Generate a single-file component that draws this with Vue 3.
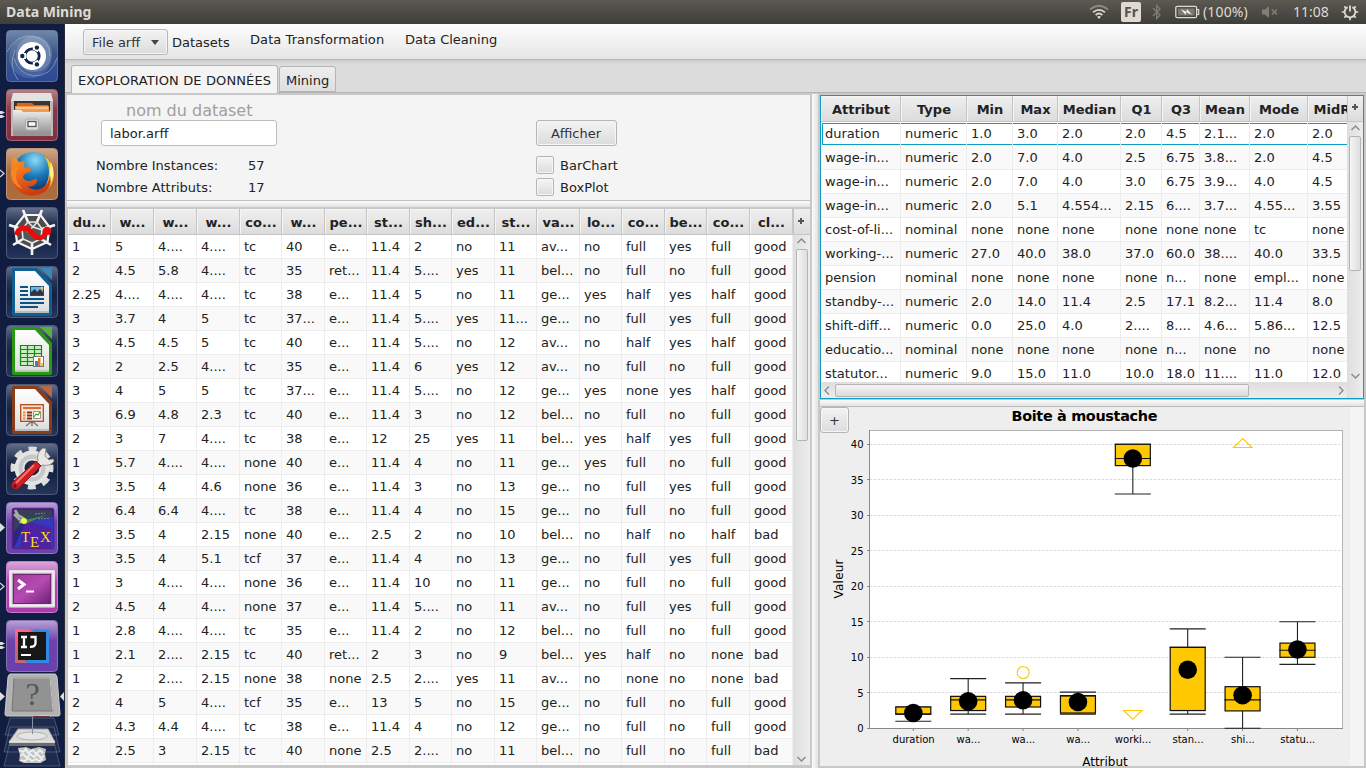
<script setup>
const cols = [43, 43, 43, 43, 42, 43, 42, 43, 42, 43, 42, 43, 42, 43, 42, 43, 43]
const gridLeft = cols.map((w) => w + 'px').join(' ')
const headLeft = 'du...|w...|w...|w...|co...|w...|pe...|st...|sh...|ed...|st...|va...|lo...|co...|be...|co...|cl...'.split('|')
const rowsLeft = `1|5|4....|4....|tc|40|e...|11.4|2|no|11|av...|no|full|yes|full|good
2|4.5|5.8|4....|tc|35|ret...|11.4|5....|yes|11|bel...|no|full|no|full|good
2.25|4....|4....|4....|tc|38|e...|11.4|5|no|11|ge...|yes|half|yes|half|good
3|3.7|4|5|tc|37...|e...|11.4|5....|yes|11...|ge...|no|full|yes|full|good
3|4.5|4.5|5|tc|40|e...|11.4|5....|no|12|av...|no|half|yes|half|good
2|2|2.5|4....|tc|35|e...|11.4|6|yes|12|av...|no|full|no|full|good
3|4|5|5|tc|37...|e...|11.4|5....|no|12|ge...|yes|none|yes|half|good
3|6.9|4.8|2.3|tc|40|e...|11.4|3|no|12|bel...|no|full|no|full|good
2|3|7|4....|tc|38|e...|12|25|yes|11|bel...|yes|half|yes|full|good
1|5.7|4....|4....|none|40|e...|11.4|4|no|11|ge...|yes|full|no|full|good
3|3.5|4|4.6|none|36|e...|11.4|3|no|13|ge...|no|full|yes|full|good
2|6.4|6.4|4....|tc|38|e...|11.4|4|no|15|ge...|no|full|no|full|good
2|3.5|4|2.15|none|40|e...|2.5|2|no|10|bel...|no|half|no|half|bad
3|3.5|4|5.1|tcf|37|e...|11.4|4|no|13|ge...|no|full|yes|full|good
1|3|4....|4....|none|36|e...|11.4|10|no|11|ge...|no|full|no|full|good
2|4.5|4|4....|none|37|e...|11.4|5....|no|11|av...|no|full|yes|full|good
1|2.8|4....|4....|tc|35|e...|11.4|2|no|12|bel...|no|full|no|full|good
1|2.1|2....|2.15|tc|40|ret...|2|3|no|9|bel...|yes|half|no|none|bad
1|2|2....|2.15|none|38|none|2.5|2....|yes|11|av...|no|none|no|none|bad
2|4|5|4....|tcf|35|e...|13|5|no|15|ge...|no|full|no|full|good
2|4.3|4.4|4....|tc|38|e...|11.4|4|no|12|ge...|no|full|no|full|good
2|2.5|3|2.15|tc|40|none|2.5|2....|no|11|bel...|no|full|no|full|bad`.split('\n').map((r) => r.split('|'))

const gridRight = '80px 66px 46px 45px 63px 41px 38px 50px 58px 84px'
const headRight = 'Attribut|Type|Min|Max|Median|Q1|Q3|Mean|Mode|MidRange'.split('|')
const rowsRight = `duration|numeric|1.0|3.0|2.0|2.0|4.5|2.1...|2.0|2.0
wage-in...|numeric|2.0|7.0|4.0|2.5|6.75|3.8...|2.0|4.5
wage-in...|numeric|2.0|7.0|4.0|3.0|6.75|3.9...|4.0|4.5
wage-in...|numeric|2.0|5.1|4.554...|2.15|6....|3.7...|4.55...|3.55
cost-of-li...|nominal|none|none|none|none|none|none|tc|none
working-...|numeric|27.0|40.0|38.0|37.0|60.0|38....|40.0|33.5
pension|nominal|none|none|none|none|n...|none|empl...|none
standby-...|numeric|2.0|14.0|11.4|2.5|17.1|8.2...|11.4|8.0
shift-diff...|numeric|0.0|25.0|4.0|2....|8....|4.6...|5.86...|12.5
educatio...|nominal|none|none|none|none|n...|none|no|none
statutor...|numeric|9.0|15.0|11.0|10.0|18.0|11....|11.0|12.0`.split('\n').map((r) => r.split('|'))

// Chart geometry: origin of the svg is the top-left corner of the chart panel.
const y = (v) => 321.3 - v * 7.1
const ticks = [0, 5, 10, 15, 20, 25, 30, 35, 40]
const boxes = [
  { n: 'duration', lo: 1, q1: 2, med: 2, q3: 3, hi: 3, mean: 2.16 },
  { n: 'wa...', lo: 2, q1: 2.5, med: 4, q3: 4.5, hi: 7, mean: 3.8 },
  { n: 'wa...', lo: 2, q1: 3, med: 4, q3: 4.5, hi: 6.4, mean: 3.95 },
  { n: 'wa...', lo: 2, q1: 2.15, med: 4.55, q3: 4.6, hi: 5.1, mean: 3.7 },
  { n: 'worki...', lo: 33, q1: 37, med: 38, q3: 40, hi: 40, mean: 38 },
  { n: 'stan...', lo: 2, q1: 2.5, med: 11.4, q3: 11.4, hi: 14, mean: 8.25 },
  { n: 'shi...', lo: 0, q1: 2.45, med: 4, q3: 5.86, hi: 10, mean: 4.65 },
  { n: 'statu...', lo: 9, q1: 10, med: 11, q3: 12, hi: 15, mean: 11.1 }
].map((b, i) => ({ ...b, x: 93.3 + i * 54.88 }))
</script>

<template>
  <div class="desktop">
    <header class="panel">
      <b class="title">Data Mining</b>
      <svg class="wifi" width="20" height="16" viewBox="0 0 20 16" fill="none" stroke="#dfdbd2" stroke-width="1.7">
        <path d="M1 5.5Q10-2 19 5.5" stroke="#8b8880" />
        <path d="M4 8.3Q10 3.3 16 8.3M6.6 11Q10 8 13.4 11" />
        <path d="M8 12.7L10 15l2-2.3Q10 11.4 8 12.7" fill="#dfdbd2" stroke="none" />
      </svg>
      <span class="lang">Fr</span>
      <svg class="bt" width="10" height="16" viewBox="0 0 10 16" fill="none" stroke="#817e77" stroke-width="1.3"><path d="M1 4l7 7-3.3 3.6V1.4L8 5l-7 7" /></svg>
      <svg class="bat" width="25" height="14" viewBox="0 0 25 14"><rect x=".8" y="1.3" width="20.8" height="11.4" rx="1.5" fill="none" stroke="#dfdbd2" stroke-width="1.3" /><path d="M22 4.5h1.7v5H22" fill="none" stroke="#dfdbd2" stroke-width="1.2" /><rect x="3" y="3.5" width="16.5" height="7" fill="#7b7972" /><path d="M6 4.200l5.500 2.600.5-2.800 5 5.800-6-2.600-.5 2.800z" fill="#f4f1ea" /></svg>
      <span class="pct">(100%)</span>
      <svg class="mute" width="18" height="14" viewBox="0 0 18 14"><path d="M1 4.5h3L8 1v12L4 9.5H1z" fill="#817e77" /><path d="M11 4.5l5 5M16 4.5l-5 5" stroke="#817e77" stroke-width="1.7" /></svg>
      <span class="clock">11:08</span>
      <svg class="power" width="18" height="18" viewBox="0 0 18 18" fill="none" stroke="#dfdbd2"><path d="M6.600 4.100a5.400 5.400 0 1 0 4.800 0M9 2.500v6" stroke-width="1.800" /><path d="M9 14.500V17.200M14.500 9h2.700M.8 9h2.700M3.300 3.300l1.900 1.900M14.700 3.300l-1.900 1.900M3.300 14.700l1.900-1.900M14.700 14.700l-1.900-1.900" stroke-width="1.700" /></svg>
    </header>

    <div class="body">
      <nav class="launcher">
        <svg class="tile" viewBox="0 0 65 52">
          <defs>
            <linearGradient id="blue" x2="0" y2="1"><stop stop-color="#7288aa" /><stop offset=".45" stop-color="#3a568c" /><stop offset="1" stop-color="#2c4996" /></linearGradient>
            <linearGradient id="red" x2="0" y2="1"><stop stop-color="#b58288" /><stop offset=".4" stop-color="#893949" /><stop offset="1" stop-color="#803040" /></linearGradient>
            <linearGradient id="orange" x2="0" y2="1"><stop stop-color="#cfa88e" /><stop offset=".45" stop-color="#ab693f" /><stop offset="1" stop-color="#ae6d3c" /></linearGradient>
            <linearGradient id="navy" x2="0" y2="1"><stop stop-color="#65708b" /><stop offset=".3" stop-color="#263454" /><stop offset=".55" stop-color="#14213f" /><stop offset="1" stop-color="#25355c" /></linearGradient>
            <linearGradient id="violet" x2="0" y2="1"><stop stop-color="#b9a2d8" /><stop offset=".4" stop-color="#6d43a8" /><stop offset="1" stop-color="#6940ae" /></linearGradient>
            <linearGradient id="pink" x2="0" y2="1"><stop stop-color="#dba8dc" /><stop offset=".4" stop-color="#b04cb2" /><stop offset="1" stop-color="#a93aab" /></linearGradient>
            <linearGradient id="silver" x2="0" y2="1"><stop stop-color="#eee" /><stop offset="1" stop-color="#929292" /></linearGradient>
            <linearGradient id="paper" x2="0" y2="1"><stop stop-color="#fff" /><stop offset="1" stop-color="#dcdcdc" /></linearGradient>
            <radialGradient id="globe" cx=".55" cy=".2" r=".8"><stop stop-color="#8ddcf8" /><stop offset=".5" stop-color="#197bb8" /><stop offset="1" stop-color="#082d68" /></radialGradient>
            <linearGradient id="fox" x2=".3" y2="1"><stop stop-color="#f99a20" /><stop offset=".5" stop-color="#ee6a1b" /><stop offset="1" stop-color="#c93d15" /></linearGradient>
            <linearGradient id="screen" x2="1" y2="1"><stop stop-color="#9f3c9a" /><stop offset=".5" stop-color="#b64ab3" /><stop offset="1" stop-color="#6c1f76" /></linearGradient>
          </defs>
          <g transform="translate(6 0)">
            <rect x=".5" y=".5" width="51" height="51" rx="4" fill="url(#blue)" stroke="#8594b3" stroke-opacity=".6" />
            <circle cx="24" cy="27" r="21" fill="#c7d2e7" opacity=".16" /><circle cx="28" cy="24" r="18" fill="#c7d2e7" opacity=".24" />
            <path d="M1 22Q10 4 27 6q17 3 17 20M51 28Q46 46 28 46 12 44 8 28M12 50Q2 36 9 20" fill="none" stroke="#c7d2e7" stroke-opacity=".45" />
            <circle cx="26" cy="26" r="14" fill="#fff" />
            <circle cx="26" cy="26" r="7.200" fill="none" stroke="#14254d" stroke-width="2.800" />
            <path d="M20 26h-8M29 20.800l4-6.900M29 31.200l4 6.900" stroke="#fff" stroke-width="6" />
            <g fill="#14254d"><circle cx="16.3" cy="26" r="2.2" /><circle cx="30.9" cy="17.6" r="2.2" /><circle cx="30.9" cy="34.4" r="2.2" /></g>
          </g>
        </svg>
        <svg class="tile" viewBox="0 0 65 52">
          <path d="M0 22h2l3 1.5L2 25H0zM0 26h2l3 1.5L2 29H0z" fill="#ddd" />
          <g transform="translate(6 0)">
            <rect x=".5" y=".5" width="51" height="51" rx="4" fill="url(#red)" stroke="#a9636d" />
            <path d="M7 4h38l2 8v35H5V12z" fill="#b9b9b9" /><path d="M7 4h38l2 8H5z" fill="#e2e2e2" />
            <path d="M8 12h36v11H8z" fill="#3c342e" /><path d="M11 14h15l2 2h14v8H10z" fill="#d8641c" /><path d="M9 17h34v6H9z" fill="#f39a4e" /><path d="M10 19h32" stroke="#fde8cc" />
            <path d="M7 21h8l2 2h26l2-2v24H7z" fill="url(#silver)" /><path d="M7 46h38" stroke="#757575" />
            <rect x="19.500" y="30" width="13" height="11" rx="2" fill="#ddd" stroke="#aaa" /><rect x="22" y="32.500" width="8" height="5" fill="#f6f6f6" stroke="#555" stroke-width="1.3" />
          </g>
        </svg>
        <svg class="tile" viewBox="0 0 65 52">
          <path d="M0 22l4 3.500L0 29" fill="none" stroke="#ddd" stroke-width="1.200" />
          <g transform="translate(6 0)">
            <rect x=".5" y=".5" width="51" height="51" rx="4" fill="url(#orange)" stroke="#c19476" />
            <circle cx="27" cy="24" r="20" fill="url(#globe)" />
            <path d="M38 8Q48 14 48 27 46 43 32 46 43 37 43 25 43 14 38 8z" fill="#f6c92a" /><path d="M45 14q5 12-1 22l-3 4q4-8 3-17z" fill="#fff38f" />
            <path d="M8 8l5 6 6-1q-2 5 0 7 5-2 6 1 0 3-5 4l-3 3q0 5 7 5l5-2q3-1 2 3-4 6-10 4 7 6 15 2 7-4 8-13 3 12-7 18-12 6-23-1Q3 36 5 22 5 14 8 8z" fill="url(#fox)" />
            <path d="M5 23q3-5 8-5Q5 31 17 41 5 37 5 23z" fill="#f68622" />
          </g>
        </svg>
        <svg class="tile" viewBox="0 0 65 52">
          <g transform="translate(6 0)">
            <rect x=".5" y=".5" width="51" height="51" rx="4" fill="url(#navy)" stroke="#4d5a78" />
            <path d="M18.500 8h16l9 12-2 15-15.500 7L11 35 9 20z" fill="#4c4c4c" stroke="#f5f5f5" stroke-width="2.200" />
            <path d="M17 3l5 12M36 3l-5 12M49 18l-13 4M45 38l-10-6M26 48V36M7 38l10-6M3 18l13 4" fill="none" stroke="#f5f5f5" stroke-width="2.600" />
            <path d="M22 15h9l5 7-1 10-9 4-9-4-1-10z" fill="#565656" stroke="#e6e6e6" stroke-width="1.600" /><path d="M27 20l-5-5M27 20l4-5M27 20l9 3M27 20l-6 5" fill="none" stroke="#e6e6e6" stroke-width="1.500" />
            <path d="M10 28q3-7 8-7 4 0 8 5t8 5q3 0 8-8" fill="none" stroke="#f00808" stroke-width="4.800" /><circle cx="41" cy="24" r="4.300" fill="#f00808" />
          </g>
        </svg>
        <svg class="tile" viewBox="0 0 65 52">
          <g transform="translate(6 0)">
            <rect x=".5" y=".5" width="51" height="51" rx="4" fill="url(#navy)" stroke="#4d5a78" />
            <path d="M7 2h24l15 16v30q0 2-2 2H8q-2 0-2-2V4q0-2 1-2z" fill="#0f5f92" /><path d="M9 5h20l14 15v27H9z" fill="url(#paper)" /><path d="M9 45h34v2H9z" fill="#b5bcc2" /><path d="M34 2h12v12z" fill="#3a88b6" />
            <path d="M14 21h8M14 25h8M14 29h8M14 33h24M14 37h24M14 41h18" stroke="#095483" stroke-width="1.900" />
            <rect x="24.500" y="20.500" width="13" height="9" fill="#6db5e4" stroke="#175074" /><path d="M25 29v-3l4-3 2 3 3-3 3 3v3z" fill="#334" /><circle cx="36" cy="22" r="1.500" fill="#f3c343" />
          </g>
        </svg>
        <svg class="tile" viewBox="0 0 65 52">
          <g transform="translate(6 0)">
            <rect x=".5" y=".5" width="51" height="51" rx="4" fill="url(#navy)" stroke="#4d5a78" />
            <path d="M7 2h24l15 16v30q0 2-2 2H8q-2 0-2-2V4q0-2 1-2z" fill="#289813" /><path d="M9 5h20l14 15v27H9z" fill="url(#paper)" /><path d="M9 45h34v2H9z" fill="#bdc4bb" /><path d="M34 2h12v12z" fill="#54b23e" />
            <rect x="14" y="20" width="22" height="21" fill="#c6ecc0" /><path d="M14.500 20.500h21v20h-21zM14 24.500h21M14 28.500h21M14 32.500h21M14 36.500h21M21.500 20v21M28.500 20v21" fill="none" stroke="#158713" stroke-width="1.200" />
            <rect x="27.500" y="31.500" width="10" height="10" fill="#fff" stroke="#777" /><path d="M29 36h3v5h-3z" fill="#248ace" /><path d="M32 33h2.500v8H32z" fill="#e27224" /><path d="M34.500 38H37v3h-2.500z" fill="#ffc428" />
          </g>
        </svg>
        <svg class="tile" viewBox="0 0 65 52">
          <g transform="translate(6 0)">
            <rect x=".5" y=".5" width="51" height="51" rx="4" fill="url(#navy)" stroke="#4d5a78" />
            <path d="M7 2h24l15 16v30q0 2-2 2H8q-2 0-2-2V4q0-2 1-2z" fill="#8b3c18" /><path d="M9 5h20l14 15v27H9z" fill="url(#paper)" /><path d="M9 45h34v2H9z" fill="#bbb" /><path d="M34 2h12v12z" fill="#b96840" />
            <path d="M26 38v4M26 37l-6 5M26 37l6 5" stroke="#777" stroke-width="1.500" />
            <rect x="14.700" y="20.700" width="22.600" height="16.600" fill="#f7e7dd" stroke="#ad4b18" stroke-width="1.300" />
            <path d="M17 24h18" stroke="#d9712d" stroke-width="2.200" /><path d="M17 28.500h2.500M17 31.500h2.500M17 34.500h2.500" stroke="#e68b50" stroke-width="2" /><path d="M21 28.500h5M21 31.500h5M21 34.500h5" stroke="#81351a" stroke-width="2" />
            <path d="M27.500 27.500h7v7h-7z" fill="#fff" stroke="#777" stroke-width=".8" /><path d="M28 33l2-3 2 1 2-3" fill="none" stroke="#37a22d" stroke-width="1.200" />
          </g>
        </svg>
        <svg class="tile" viewBox="0 0 65 52">
          <g transform="translate(6 0)">
            <rect x=".5" y=".5" width="51" height="51" rx="4" fill="url(#navy)" stroke="#4d5a78" />
            <circle cx="26" cy="25" r="19" fill="none" stroke="#dcdddd" stroke-width="5" stroke-dasharray="8 6.920" stroke-dashoffset="4" />
            <circle cx="26" cy="25" r="12.500" fill="none" stroke="#e3e4e4" stroke-width="10" /><circle cx="26" cy="25" r="11.500" fill="none" stroke="#c5c7c9" stroke-width="4" />
            <path d="M32 18q-2-8 5-13l3 1-1 7 4 4 4-1 1 2q-4 6-12 4l-3 3-5-5z" fill="#e7e7e4" stroke="#979797" />
            <path d="M30 18l5 5-22 22q-3 3-6.500 0-2.500-3 .5-6z" fill="#cf2027" stroke="#8d1218" /><path d="M28 22L10 40" stroke="#f07a77" stroke-width="1.800" /><circle cx="9" cy="43" r="1.700" fill="#601014" />
          </g>
        </svg>
        <svg class="tile" viewBox="0 0 65 52">
          <path d="M0 21l5 4.500L0 30z" fill="#ddd" />
          <g transform="translate(6 0)">
            <rect x=".5" y=".5" width="51" height="51" rx="4" fill="url(#violet)" stroke="#9076bb" />
            <rect x="6.500" y="6.500" width="41" height="40" rx="2" fill="#2e2485" stroke="#572081" stroke-width="1.500" /><path d="M8 8h38v8L18 18 8 30z" fill="#373e57" /><path d="M20 20l27-5v31H8z" fill="#3540d0" opacity=".75" /><path d="M18 18l27 8v20H14z" fill="#5a1795" opacity=".65" /><path d="M19 18l22-5-22 9z" fill="#3a8c53" />
            <path d="M9 8l3 5 5 3-3 5M8 12l6 6" fill="none" stroke="#a8a8a8" stroke-width="2.500" /><circle cx="18" cy="19" r="3" fill="#dfff40" />
            <path d="M29 12l10-1M32 17l12-1" stroke="#8186a0" stroke-dasharray="2 1" />
            <g class="tex" fill="#ffd91d"><text x="15" y="40">T</text><text x="24" y="45">E</text><text x="34" y="40">X</text></g>
          </g>
        </svg>
        <svg class="tile" viewBox="0 0 65 52">
          <path d="M0 22l4 3.500L0 29" fill="none" stroke="#ddd" stroke-width="1.200" />
          <g transform="translate(6 0)">
            <rect x=".5" y=".5" width="51" height="51" rx="4" fill="url(#pink)" stroke="#c77bcb" />
            <rect x="3" y="9" width="46" height="38" rx="1.500" fill="#b3aab3" /><rect x="4.500" y="10.500" width="43" height="34" fill="none" stroke="#f4edf4" stroke-width="2.500" /><rect x="7.500" y="13.500" width="37" height="29" fill="url(#screen)" stroke="#702571" />
            <path d="M12 19l6 4.500-6 4.500" fill="none" stroke="#fff" stroke-width="3" /><path d="M20 30.500h8" stroke="#fff" stroke-width="2" />
          </g>
        </svg>
        <svg class="tile" viewBox="0 0 65 52">
          <path d="M0 22h2l3 1.500L2 25H0zM0 26h2l3 1.500L2 29H0z" fill="#ddd" />
          <g transform="translate(6 0)">
            <rect x=".5" y=".5" width="51" height="51" rx="4" fill="url(#violet)" stroke="#8972b2" />
            <path d="M9 9h20v17L12 40 9 30z" fill="#f4567f" /><path d="M27 9l16 1v33H20z" fill="#3189e3" /><path d="M9 25l12 18H9z" fill="#be6a76" /><path d="M9 9h13l8 8H9z" fill="#ff6388" />
            <rect x="12" y="12" width="28" height="28" fill="#171717" />
            <path d="M15 17h6M18 17v10M15 27h6M24.500 17h5v6q0 4-5.500 3.800" fill="none" stroke="#fff" stroke-width="2.300" /><path d="M15 35h10" stroke="#fff" stroke-width="2" />
          </g>
        </svg>
        <svg class="stack" viewBox="0 0 65 96">
          <g fill="#8191b5" fill-opacity=".12" stroke="#8b99b5" stroke-opacity=".4"><path d="M10 55h44l6 25H4zM10 46h44l5 17H5zM10 70h44l6 24H4z" /></g>
          <path d="M10 2h45q1 0 2 3l3 37q0 2-2 2H7q-2 0-2-2L8 5q1-3 2-3z" fill="#b2b2b2" stroke="#cdcdcd" />
          <path d="M14 6h36l3 33H12z" fill="#929292" stroke="#777" /><path d="M14 6h36l3 33" fill="none" stroke="#c1c1c1" />
          <text class="quest" x="32.500" y="33" text-anchor="middle">?</text>
          <path d="M0 20l5 4.500L0 29zM64 20l-4 4.500 4 4.500z" fill="#ddd" />
          <path d="M39 45v-1h11v1" stroke="#ddd" fill="none" /><path d="M34 45h16" stroke="#65303c" stroke-width="2" />
          <path d="M18 57h30l7 13H9z" fill="#d9dad8" stroke="#a5a5a5" /><path d="M9 70h46v4H9z" fill="#6b6b6b" /><path d="M9 70h46" stroke="#f2f2f2" stroke-width="1.500" /><ellipse cx="32" cy="64" rx="15" ry="4" fill="#e4e4e2" stroke="#b2b2b2" /><path d="M32.500 45v17" stroke="#8290a4" />
          <path d="M18 76l8-1 5 2 8-2 7 2-1 5 1 6-4 2-1 1-9 0-8 0-5-2 1-6z" fill="#bfc4c3" />
          <path d="M19 78l4 2 3-3 2 4 5-3 3 4 4-4 3 3M20 84l3-2 4 4 3-4 4 3 3-3 4 4 3-2M21 88l4 1 3-3 4 3 4-2 3 2 4-2" fill="none" stroke="#f0f1ee" stroke-width="1.800" stroke-linejoin="round" />
        </svg>
      </nav>

      <main class="app">
        <div class="toolbar">
          <button class="btn menu">File arff<i class="caret"></i></button>
          <span class="ds">Datasets</span><span class="dt">Data Transformation</span><span class="dc">Data Cleaning</span>
        </div>
        <div class="tabs"><span class="tab active">EXOPLORATION DE DONNÉES</span><span class="tab second">Mining</span></div>

        <div class="split">
          <section class="left">
            <div class="form">
              <div class="info">
                <div class="name">nom du dataset</div>
                <div class="field">labor.arff</div>
                <div class="pair first"><span>Nombre Instances:</span><span>57</span></div>
                <div class="pair"><span>Nombre Attributs:</span><span>17</span></div>
              </div>
              <div class="actions">
                <button class="btn show">Afficher</button>
                <label class="check"><i></i><span>BarChart</span></label>
                <label class="check"><i></i><span>BoxPlot</span></label>
              </div>
            </div>
            <div class="hdiv"></div>
            <div class="table big">
              <div class="tmain">
                <div class="row head" :style="{ gridTemplateColumns: gridLeft }"><span v-for="(h, i) in headLeft" :key="i">{{ h }}</span></div>
                <div v-for="(r, i) in rowsLeft" :key="i" class="row" :class="{ odd: i % 2 }" :style="{ gridTemplateColumns: gridLeft }"><span v-for="(c, j) in r" :key="j">{{ c }}</span></div>
                <div class="row" :style="{ gridTemplateColumns: gridLeft }"><span v-for="c in 17" :key="c"></span></div>
              </div>
              <div class="vside">
                <div class="plus"><svg width="6" height="6"><path d="M3 0v6M0 3h6" stroke="#555" stroke-width="2" /></svg></div>
                <div class="vbar"><svg width="9" height="6"><path d="M.5 5l4-4 4 4" /></svg><i class="thumb"></i><svg class="down" width="9" height="6"><path d="M.5 1l4 4 4-4" /></svg></div>
              </div>
            </div>
          </section>
          <div class="vdiv"></div>
          <section class="right">
            <div class="table stats">
              <div class="scroll">
                <div class="tmain">
                  <div class="row head" :style="{ gridTemplateColumns: gridRight }"><span v-for="(h, i) in headRight" :key="i">{{ h }}</span></div>
                  <div v-for="(r, i) in rowsRight" :key="i" class="row" :class="{ odd: i % 2, sel: i === 0 }" :style="{ gridTemplateColumns: gridRight }"><span v-for="(c, j) in r" :key="j">{{ c }}</span></div>
                </div>
                <div class="hbar"><svg width="6" height="9"><path d="M5 .5l-4 4 4 4" /></svg><i class="hthumb"></i><svg class="rt" width="6" height="9"><path d="M1 .5l4 4-4 4" /></svg></div>
              </div>
              <div class="vside">
                <div class="plus"><svg width="6" height="6"><path d="M3 0v6M0 3h6" stroke="#555" stroke-width="2" /></svg></div>
                <div class="vbar"><svg width="9" height="6"><path d="M.5 5l4-4 4 4" /></svg><i class="thumb"></i><svg class="down" width="9" height="6"><path d="M.5 1l4 4 4-4" /></svg></div>
              </div>
            </div>
            <div class="hdiv2"></div>
            <div class="chart">
              <svg width="530" height="359" viewBox="0 0 530 359">
                <rect width="530" height="359" fill="#eee" />
                <text x="264.500" y="13.800" class="ctitle" textLength="146">Boite à moustache</text>
                <rect x="49.500" y="23.500" width="473" height="298" fill="#fff" stroke="#b4b4b4" />
                <g v-for="t in ticks" :key="t">
                  <path v-if="t" :d="`M50 ${Math.floor(y(t)) + 0.5}H522`" stroke="#d9d9d9" stroke-dasharray="2.500 1.500" />
                  <path :d="`M47 ${Math.floor(y(t)) + 0.5}H50`" stroke="#888" />
                  <text x="43.500" :y="y(t) + 3.800" class="lab" text-anchor="end">{{ t }}</text>
                </g>
                <path d="M49.500 23v298.500H523" fill="none" stroke="#888" />
                <g v-for="(b, i) in boxes" :key="i">
                  <path :d="`M${b.x} ${y(b.hi)}V${y(b.q3)}M${b.x} ${y(b.q1)}V${y(b.lo)}M${b.x - 18} ${y(b.hi)}h36M${b.x - 18} ${y(b.lo)}h36`" stroke="#222" stroke-width="1.100" />
                  <rect :x="b.x - 17.500" :y="y(b.q3)" width="35" :height="(b.q3 - b.q1) * 7.1" fill="#ffc800" stroke="#111" stroke-width="1.200" />
                  <path :d="`M${b.x - 18} ${y(b.med)}h36`" stroke="#111" stroke-width="1.100" />
                  <circle :cx="b.x" :cy="y(b.mean)" r="9.300" fill="#000" />
                  <path :d="`M${b.x} 322v2`" stroke="#888" />
                  <text :x="b.x + 0.300" y="336" class="lab" text-anchor="middle">{{ b.n }}</text>
                </g>
                <g fill="none" stroke="#ffc800" stroke-width="1.100"><circle cx="203.200" cy="265.500" r="6" /><path d="M303.500 303.500h18.500l-9.250 8.700zM413.500 40.500h18.500l-9.250-8.900z" /></g>
                <text x="285" y="358.500" class="ax" text-anchor="middle">Attribut</text>
                <text transform="translate(23 172) rotate(-90)" class="ax" text-anchor="middle" textLength="39">Valeur</text>
              </svg>
              <button class="btn add">+</button>
            </div>
          </section>
        </div>
      </main>
    </div>
  </div>
</template>

<style>
body { margin: 0; overflow: hidden; }
</style>

<style scoped>
.desktop { width: 1366px; height: 768px; overflow: hidden; display: flex; flex-direction: column; font: 13px/16px "DejaVu Sans", sans-serif; color: #222; }
.desktop * { box-sizing: border-box; }
svg { display: block; flex: none; }
.panel { height: 24px; flex: none; display: flex; align-items: center; background: linear-gradient(#5c5a50, #55534c 20%, #3e3d39); color: #dfdbd2; font: 14px/24px "Noto Sans", sans-serif; white-space: nowrap; }
.title { margin-left: 6px; width: 1083px; font-size: 14px; }
.lang { width: 20px; height: 20px; margin-left: 12px; border-radius: 2px; background: #dfdbd2; color: #55534c; text-align: center; font: bold 14px/20px "Noto Sans", sans-serif; }
.bt { margin-left: 11px; }
.bat { margin-left: 13px; }
.pct { margin-left: 3px; width: 46px; letter-spacing: 0.150px; }
.mute { margin-left: 12px; }
.clock { margin-left: 14px; width: 36px; }
.power { margin-left: 12px; }
.body { display: flex; flex: 1; min-height: 0; }
.launcher { width: 65px; flex: none; background: #101d40; border-right: 1px solid #292c38; display: flex; flex-direction: column; padding-top: 6px; gap: 7px; overflow: hidden; }
.tile { width: 65px; height: 52px; }
.stack { width: 65px; height: 96px; margin-top: -7px; }
.tex { font: 15px "Liberation Serif", serif; }
.quest { font: 32px "Liberation Serif", serif; fill: #555; }

.app { flex: 1; min-width: 0; display: flex; flex-direction: column; background: #f4f4f4; }
.btn { font: inherit; color: #333; padding: 0; border: 1px solid #b5b5b5; border-radius: 3px; background: linear-gradient(#f3f3f3, #dcdcdc); box-shadow: inset 0 0 0 1px #f6f6f6; display: flex; align-items: center; justify-content: center; }
.toolbar { height: 36px; flex: none; background: linear-gradient(#fdfdfd, #e6e6e6); border-bottom: 1px solid #b8b8b8; display: flex; align-items: flex-start; white-space: nowrap; }
.menu { width: 85px; height: 26px; margin: 5px 0 0 18px; justify-content: flex-start; padding: 1px 0 0 8px; }
.caret { margin: -1px 0 0 11px; border: 4.500px solid transparent; border-top: 5px solid #444; border-bottom: 0; }
.ds { margin: 11px 0 0 4px; width: 78px; }
.dt { margin-top: 8px; width: 155px; letter-spacing: 0.080px; }
.dc { margin-top: 8px; }
.tabs { height: 33px; flex: none; background: linear-gradient(#cacaca, #dcdcdc 4px); border-bottom: 1px solid #b4b4b4; display: flex; align-items: flex-end; padding-left: 6px; white-space: nowrap; }
.tab { height: 27px; border: 1px solid #b4b4b4; border-radius: 3px 3px 0 0; line-height: 27px; background: linear-gradient(#eee, #dedede); }
.active { width: 207px; background: #f4f4f4; border-bottom: 0; margin-bottom: -1px; height: 28px; line-height: 29px; padding-left: 6px; letter-spacing: 0.120px; }
.second { width: 57px; margin-left: 1px; height: 26px; padding-left: 6px; }
.split { flex: 1; min-height: 0; display: flex; padding: 2px 2px 0 2px; background: #c8c8c8; }
.left { width: 743px; display: flex; flex-direction: column; }
.form { height: 105px; flex: none; display: flex; background: #f4f4f4; padding-left: 29px; }
.info { width: 440px; padding-top: 7px; }
.name { font-size: 16px; line-height: 17px; color: #a0a0a0; padding-left: 30px; }
.field { width: 176px; height: 26px; margin: 1px 0 0 5px; border: 1px solid #bdbdbd; border-radius: 3px; background: #fff; line-height: 25px; padding-left: 8px; }
.pair { height: 22px; line-height: 22px; display: flex; }
.pair span:first-child { width: 152px; }
.first { margin-top: 9px; }
.actions { padding-top: 25px; }
.show { width: 81px; height: 26px; margin-bottom: 8px; padding: 1px 1px 0 0; }
.check { height: 22px; display: flex; align-items: center; }
.check span { padding-top: 2px; }
.check i { width: 18px; height: 18px; margin-right: 6px; border: 1px solid #b5b5b5; border-radius: 2px; background: linear-gradient(#f5f5f5, #dcdcdc); box-shadow: inset 0 0 0 1px #f6f6f6; }
.hdiv { height: 7px; flex: none; border-top: 1px solid #c0c0c0; background: linear-gradient(#fcfcfc, #e2e2e2); }
.table { display: flex; background: #fff; }
.big { flex: 1; min-height: 0; margin: 2px 0 3px 1px; overflow: hidden; }
.tmain { overflow: hidden; }
.row { display: grid; height: 24px; white-space: nowrap; }
.row span { border-right: 1px solid #ededed; border-bottom: 1px solid #ededed; padding-left: 4px; line-height: 23px; overflow: hidden; }
.odd { background: #f9f9f9; }
.big .head { height: 26px; }
.row.head span { border-color: #c5c5c5; background: linear-gradient(#efefef, #dcdcdc); font-weight: bold; text-align: center; padding: 0 0 0 1px; line-height: 27px; box-shadow: inset 1px 1px #f5f5f5; }
.big .tmain { width: 725px; }
.vside { flex: 1; display: flex; flex-direction: column; background: #e9e9e9; }
.plus { height: 26px; flex: none; display: flex; align-items: center; justify-content: center; border-left: 1px solid #c5c5c5; border-bottom: 1px solid #c5c5c5; background: linear-gradient(#efefef, #dcdcdc); padding: 0 3px 2px 0; }
.stats .plus { padding: 0 1px 3px 0; }
.vbar { flex: 1; display: flex; flex-direction: column; align-items: center; background: linear-gradient(90deg, #dedede, #ededed); padding: 3px 0; }
.vbar path, .hbar path { fill: none; stroke: #888; stroke-width: 1.300; }
.thumb { width: 12px; height: 192px; margin-top: 5px; border: 1px solid #b5b5b5; border-radius: 2px; background: linear-gradient(90deg, #f5f5f5, #dedede); }
.down { margin-top: auto; }
.vdiv { width: 6px; margin: -1px 2px 0; background: linear-gradient(90deg, #fcfcfc, #e2e2e2); }
.right { flex: 1; min-width: 0; display: flex; flex-direction: column; background: #f4f4f4; }
.stats { height: 304px; flex: none; border: 1px solid #0c9cc9; }
.scroll { width: 526px; overflow: hidden; display: flex; flex-direction: column; }
.scroll .tmain { height: 286px; width: 526px; }
.stats .row { width: 571px; }
.stats .head, .stats .plus { height: 26px; }
.stats .row.sel span { border-bottom-color: #fff; background: linear-gradient(#0c9cc9, #0c9cc9) 0 1px / 100% 1px no-repeat, linear-gradient(#0c9cc9, #0c9cc9) 0 22px / 100% 1px no-repeat; }
.stats .row.sel span:first-child { background: linear-gradient(#0c9cc9, #0c9cc9) 1px 1px / 1px 22px no-repeat, linear-gradient(#0c9cc9, #0c9cc9) 1px 1px / 100% 1px no-repeat, linear-gradient(#0c9cc9, #0c9cc9) 1px 22px / 100% 1px no-repeat; }
.stats .vbar { padding-bottom: 19px; }
.hbar { height: 16px; display: flex; align-items: center; background: linear-gradient(#dedede, #ededed); padding: 0 3px; }
.hthumb { width: 414px; height: 13px; margin-left: 5px; border: 1px solid #b5b5b5; border-radius: 2px; background: linear-gradient(#f5f5f5, #dadada); }
.rt { margin-left: auto; }
.stats .thumb { height: 135px; }
.hdiv2 { height: 8px; flex: none; border-top: 1px solid #c8c8c8; border-bottom: 1px solid #bdbdbd; background: linear-gradient(#fcfcfc, #e2e2e2); }
.chart { flex: 1; min-height: 0; position: relative; border-bottom: 2px solid #c8c8c8; overflow: hidden; }
.add { position: absolute; left: 0; top: 0; width: 29px; height: 26px; padding-top: 1px; }
.ctitle { font-size: 14.400px; font-weight: bold; fill: #000; text-anchor: middle; }
.lab { font-size: 10px; fill: #000; }
.ax { font-size: 12px; fill: #000; }
</style>
